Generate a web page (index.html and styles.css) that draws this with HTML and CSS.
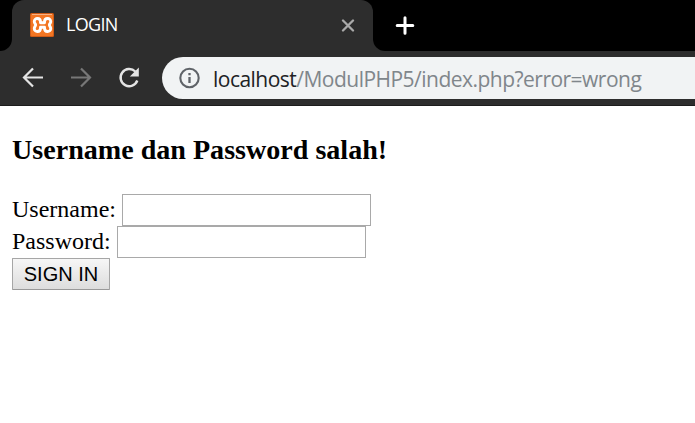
FILE: index.html
```html
<!DOCTYPE html>
<html lang="id">
<head>
<meta charset="utf-8">
<title>LOGIN</title>
<link rel="stylesheet" href="styles.css">
</head>
<body>
<header class="browser">
  <div class="tabs">
    <div class="tab-before"><div class="curve curve-left"></div></div>
    <div class="tab">
      <svg class="favicon" width="24" height="24" viewBox="0 0 24 24">
        <rect width="24" height="24" rx="1.5" fill="#cf5b17"/>
        <rect x="1" y="1" width="22" height="22" rx="1" fill="#f37623"/>
        <path d="M2 1.500h20" stroke="#f7b184" stroke-width="1"/>
        <path d="M10.500 9.800V8.800C10.500 4.500 4.300 4.500 4.300 8.500C4.300 10.500 5.600 10.700 5.600 12C5.600 13.300 4.300 13.500 4.300 15.500C4.300 19.500 10.500 19.500 10.500 15.200V14.200H14.500V15.200C14.500 19.500 20.700 19.500 20.700 15.500C20.700 13.500 19.400 13.300 19.400 12C19.400 10.700 20.700 10.500 20.700 8.500C20.700 4.500 14.500 4.500 14.500 8.800V9.800Z" fill="none" stroke="#fff" stroke-width="2.900" stroke-linejoin="round"/>
      </svg>
      <span class="tab-title">LOGIN</span>
      <svg class="close" width="14" height="14" viewBox="0 0 14 14"><path d="M2 1.500l10 10M12 1.500L2 11.500" stroke="#a9a9a9" stroke-width="2.300" stroke-linecap="round"/></svg>
    </div>
    <div class="tab-after">
      <div class="curve curve-right"></div>
      <svg class="plus" width="20" height="20" viewBox="0 0 20 20"><path d="M10 1.700v15.600M2.200 9.500h15.600" stroke="#fff" stroke-width="3" stroke-linecap="round"/></svg>
    </div>
  </div>
  <div class="toolbar">
    <svg class="nav" width="24" height="24" viewBox="0 0 24 24"><path d="M22 11.500H3.500M12 2.500l-9 9 9 9" fill="none" stroke="#e4e4e4" stroke-width="2.200"/></svg>
    <svg class="nav" width="24" height="24" viewBox="0 0 24 24"><path d="M2 11.500h18.500M12 2.500l9 9-9 9" fill="none" stroke="#777" stroke-width="2.200"/></svg>
    <svg class="nav" width="24" height="24" viewBox="0 0 24 24"><path d="M18.300 5.500A8.600 8.600 0 1 0 20.300 14.500" fill="none" stroke="#e4e4e4" stroke-width="2.400"/><path d="M21.800 1.500v9h-9z" fill="#e4e4e4"/></svg>
    <div class="address">
      <svg class="info" width="22" height="22" viewBox="0 0 22 22"><circle cx="10.500" cy="11" r="9.200" fill="none" stroke="#5f6368" stroke-width="2.100"/><path d="M10.500 10v6M10.500 6v2.200" stroke="#5f6368" stroke-width="2.300"/></svg>
      <span class="url"><span class="host">localhost</span><span class="path">/ModulPHP5/index.php?error=wrong</span></span>
    </div>
  </div>
</header>
<main class="page">
  <h3 class="message">Username dan Password salah!</h3>
  <form>
    <div class="row"><label for="username">Username:</label><input class="field" type="text" id="username"></div>
    <div class="row"><label for="password">Password:</label><input class="field" type="password" id="password"></div>
    <button class="submit" type="button">SIGN IN</button>
  </form>
</main>
</body>
</html>
```
FILE: styles.css
```css
* { box-sizing: border-box; }
body { margin: 0; background: #fff; color: #000; overflow: hidden; }
svg { display: block; flex: none; }
.browser { font-family: "Open Sans", "Noto Sans", sans-serif; }
.tabs { display: flex; height: 51px; background: #000; }
.tab-before { width: 12px; background: #2d2d2d; }
.curve { height: 51px; background: #000; }
.curve-left { border-bottom-right-radius: 12px; }
.tab {
  display: flex; align-items: center; width: 361px; padding: 0 18px;
  background: #2d2d2d; border-radius: 12px 12px 0 0;
}
.favicon { margin-top: -1px; }
.tab-title { margin: -3px 0 0 12px; color: #fff; font-size: 18px; line-height: 24px; letter-spacing: -0.7px; }
.close { margin-left: auto; }
.tab-after {
  display: flex; flex: 1; align-items: center;
  background: linear-gradient(#2d2d2d, #2d2d2d) left bottom / 12px 12px no-repeat;
}
.curve-right { width: 12px; border-bottom-left-radius: 12px; }
.plus { margin-left: 10px; }
.toolbar {
  display: flex; align-items: center; height: 55px; padding-left: 21px;
  background: #2d2d2d; border-bottom: 1px solid #1c1c1c;
}
.nav { margin-right: 24px; }
.address {
  display: flex; flex: 1; align-items: center; height: 42px; margin-left: -3px; padding-left: 17px;
  background: #f1f3f4; border-radius: 21px 0 0 21px;
}
.url { margin: 1px 0 0 12px; font-size: 21px; line-height: 30px; letter-spacing: -0.52px; white-space: nowrap; }
.host { color: #202124; }
.path { color: #80868b; }
.page { padding: 28px 12px 0; font-family: "Liberation Serif", serif; font-size: 24px; }
.message { margin: 0 0 28px; font-size: 28.08px; line-height: 32px; }
.row { display: flex; align-items: center; height: 32px; }
.row label { margin-top: -2px; line-height: 30px; }
.field {
  width: 249px; height: 32px; margin: 0 0 0 6px; padding: 2px;
  border: 1px solid #a9a9a9; background: #fff; outline: none; font-size: 20px;
}
.submit {
  display: block; width: 98px; height: 32px; margin: 0; padding: 0;
  border: 1px solid #a6a6a6; border-bottom-color: #999; border-radius: 1px;
  background: linear-gradient(#f6f6f6, #ddd);
  color: #000; font: 20px/28px "Liberation Sans", sans-serif;
}
```
